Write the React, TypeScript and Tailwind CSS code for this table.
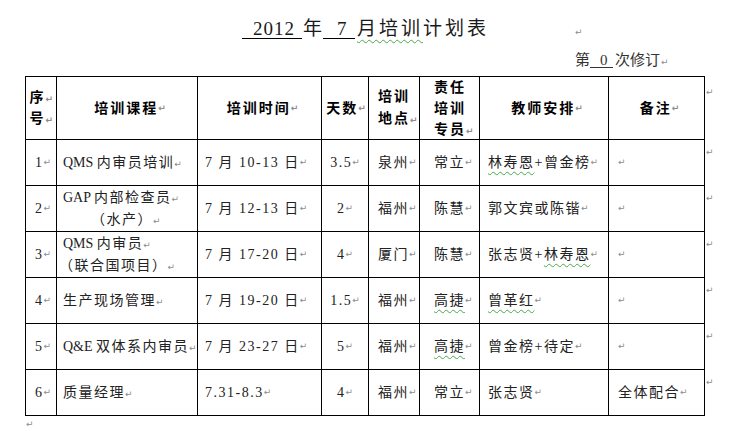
import type { ReactNode } from 'react';

// Word-style formatting mark
function Mark({ className = '' }: { className?: string }) {
  return (
    <span className={`font-['DejaVu_Sans'] text-[9px] leading-none tracking-normal text-[#8c8c8c] ${className}`}>↵</span>
  );
}

// green grammar squiggle
function Sq({ children }: { children: ReactNode }) {
  return (
    <span className="underline decoration-wavy decoration-[#4aa84a] decoration-1 underline-offset-[4px]">{children}</span>
  );
}

function Lat({ children }: { children: ReactNode }) {
  return <span className="tracking-normal">{children}</span>;
}

type Row = {
  no: string;
  course: ReactNode;
  time: ReactNode;
  days: string;
  place: string;
  person: ReactNode;
  teacher: ReactNode;
  note: string;
};

const rows: Row[] = [
  {
    no: '1',
    course: (
      <>
        <Lat>QMS </Lat>内审员培训
      </>
    ),
    time: '7 月 10-13 日',
    days: '3.5',
    place: '泉州',
    person: '常立',
    teacher: (
      <>
        <Sq>林寿恩</Sq>+曾金榜
      </>
    ),
    note: ''
  },
  {
    no: '2',
    course: (
      <div className="flex flex-col">
        <div>
          <Lat>GAP </Lat>内部检查员
          <Mark />
        </div>
        <div className="pl-[28px]">（水产）<Mark /></div>
      </div>
    ),
    time: '7 月 12-13 日',
    days: '2',
    place: '福州',
    person: '陈慧',
    teacher: '郭文宾或陈锴',
    note: ''
  },
  {
    no: '3',
    course: (
      <div className="flex flex-col">
        <div>
          <Lat>QMS </Lat>内审员
          <Mark />
        </div>
        <div className="-ml-[4px]">（联合国项目）<Mark /></div>
      </div>
    ),
    time: '7 月 17-20 日',
    days: '4',
    place: '厦门',
    person: '陈慧',
    teacher: (
      <>
        张志贤+<Sq>林寿恩</Sq>
      </>
    ),
    note: ''
  },
  {
    no: '4',
    course: '生产现场管理',
    time: '7 月 19-20 日',
    days: '1.5',
    place: '福州',
    person: <Sq>高捷</Sq>,
    teacher: <Sq>曾革红</Sq>,
    note: ''
  },
  {
    no: '5',
    course: (
      <>
        <Lat>Q&amp;E </Lat>双体系内审员
      </>
    ),
    time: '7 月 23-27 日',
    days: '5',
    place: '福州',
    person: <Sq>高捷</Sq>,
    teacher: '曾金榜+待定',
    note: ''
  },
  {
    no: '6',
    course: '质量经理',
    time: '7.31-8.3',
    days: '4',
    place: '福州',
    person: '常立',
    teacher: '张志贤',
    note: '全体配合'
  }
];

const head = 'bg-white flex items-center font-bold text-[14px] leading-[21px] tracking-[2px] text-black';
const cell = 'bg-white flex items-center text-[14px] leading-[22px] tracking-[1.5px] text-[#222] whitespace-nowrap';

function isPlain(v: ReactNode) {
  return typeof v === 'string';
}

export default function App() {
  return (
    <div className="w-[744px] h-[431px] bg-white overflow-hidden font-['Liberation_Serif','Noto_Sans_CJK_SC',serif] text-[#222]">
      {/* Title */}
      <div className="h-[38px] pt-[19px] pl-[242px] flex items-baseline text-[19px] leading-[20px] whitespace-pre text-[#1a1a1a]">
        <span className="inline-block w-[60px] pl-[11px] border-b border-black leading-[18px] tracking-[1px]">2012</span>
        <span className="inline-block w-[21px] pl-[1px]">年</span>
        <span className="inline-block w-[32px] pl-[14px] border-b border-black leading-[18px]">7</span>
        <span className="pl-[2px] tracking-[3px]">
          <Sq>月培训</Sq>计划表
        </span>
        <Mark className="ml-[86px]" />
      </div>

      {/* Revision */}
      <div className="h-[38px] pt-[14px] pl-[575px] flex items-baseline text-[15px] leading-[16px] text-[#333]">
        <span>第</span>
        <span className="inline-block w-[23px] pl-[10px] border-b border-[#333] leading-[14px]">0</span>
        <span className="pl-[2px]">次修订</span>
        <Mark className="ml-[1px]" />
      </div>

      {/* Table */}
      <div className="flex pl-[25px]">
        <div className="grid grid-cols-[30px_140px_123px_46px_50px_59px_128px_95px] grid-rows-[62px_repeat(6,45px)] gap-px bg-black p-px">
          <div className={`${head} justify-end pr-[3px] leading-[19px]`}>
            <div className="flex flex-col">
              <span>
                序<Mark />
              </span>
              <span>
                号<Mark />
              </span>
            </div>
          </div>
          <div className={`${head} justify-center pl-[6px]`}>
            培训课程
            <Mark />
          </div>
          <div className={`${head} justify-center pl-[6px]`}>
            培训时间
            <Mark />
          </div>
          <div className={`${head} justify-center pl-[2px]`}>
            天数
            <Mark />
          </div>
          <div className={`${head} pl-[9px] leading-[22px]`}>
            <div className="flex flex-col">
              <span>培训</span>
              <span>
                地点
                <Mark />
              </span>
            </div>
          </div>
          <div className={`${head} pl-[14px]`}>
            <div className="flex flex-col">
              <span>责任</span>
              <span>培训</span>
              <span>
                专员
                <Mark />
              </span>
            </div>
          </div>
          <div className={`${head} justify-center pl-[6px]`}>
            教师安排
            <Mark />
          </div>
          <div className={`${head} justify-center pl-[6px]`}>
            备注
            <Mark />
          </div>

          {rows.map((r) => (
            <div key={r.no} className="contents">
              <div className={`${cell} justify-end pr-[5px]`}>
                {r.no}
                <Mark />
              </div>
              <div className={`${cell} pl-[6px]`}>
                {isPlain(r.course) || r.no === '1' || r.no === '5' ? (
                  <span>
                    {r.course}
                    <Mark />
                  </span>
                ) : (
                  r.course
                )}
              </div>
              <div className={`${cell} pl-[7px]`}>
                {r.time}
                <Mark />
              </div>
              <div className={`${cell} justify-center`}>
                {r.days}
                <Mark />
              </div>
              <div className={`${cell} pl-[9px]`}>
                {r.place}
                <Mark />
              </div>
              <div className={`${cell} pl-[14px]`}>
                {r.person}
                <Mark />
              </div>
              <div className={`${cell} pl-[8px]`}>
                {r.teacher}
                <Mark />
              </div>
              <div className={`${cell} pl-[9px]`}>
                {r.note}
                <Mark />
              </div>
            </div>
          ))}
        </div>

        {/* end-of-row marks */}
        <div className="flex flex-col pt-px pl-px text-[9px] leading-none">
          <div className="h-[63px] pt-[11px]">
            <Mark />
          </div>
          {rows.map((r) => (
            <div key={r.no} className="h-[46px] pt-[8px]">
              <Mark />
            </div>
          ))}
        </div>
      </div>

      <div className="pl-[26px] pt-[4px] text-[9px] leading-none">
        <Mark />
      </div>
    </div>
  );
}
